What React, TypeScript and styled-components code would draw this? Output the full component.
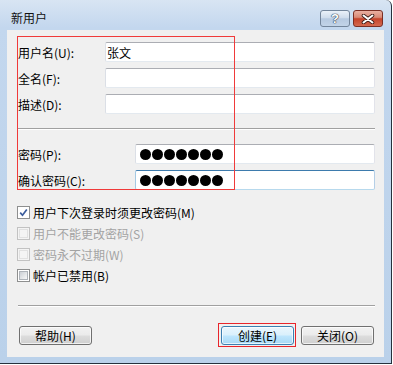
import React from "react";
import styled, { createGlobalStyle, css } from "styled-components";

const GlobalStyle = createGlobalStyle`
  html, body {
    margin: 0;
    padding: 0;
    background: #ffffff;
  }
  body {
    font-family: "Noto Sans CJK SC", "Liberation Sans", sans-serif;
    font-size: 12px;
    color: #000;
  }
`;

const fields = [
  { label: "用户名(U):", value: "张文" },
  { label: "全名(F):", value: "" },
  { label: "描述(D):", value: "" },
];

const passwords = [
  { label: "密码(P):", focused: false },
  { label: "确认密码(C):", focused: true },
];

const options = [
  { label: "用户下次登录时须更改密码(M)", checked: true, disabled: false },
  { label: "用户不能更改密码(S)", checked: false, disabled: true },
  { label: "密码永不过期(W)", checked: false, disabled: true },
  { label: "帐户已禁用(B)", checked: false, disabled: false },
];

function App() {
  return (
    <>
      <GlobalStyle />
      <Window>
        <TitleBar>
          <Title>新用户</Title>
          <CaptionButtons>
            <HelpButton>?</HelpButton>
            <CloseButton>
              <svg width="14" height="10" viewBox="0 0 14 10">
                <path d="M2.5 1.5 L11.5 8.5 M11.5 1.5 L2.5 8.5" stroke="#3a1a16" strokeWidth="3.6" strokeLinecap="round" />
                <path d="M2.5 1.5 L11.5 8.5 M11.5 1.5 L2.5 8.5" stroke="#ffffff" strokeWidth="2" strokeLinecap="round" />
              </svg>
            </CloseButton>
          </CaptionButtons>
        </TitleBar>

        <Client>
          <FieldGroup>
            {fields.map((f) => (
              <FieldRow key={f.label} $labelWidth={87}>
                <Label>{f.label}</Label>
                <TextBox>{f.value}</TextBox>
              </FieldRow>
            ))}
          </FieldGroup>

          <Separator $top={14} />

          <FieldGroup $top={14}>
            {passwords.map((p) => (
              <FieldRow key={p.label} $labelWidth={117}>
                <Label>{p.label}</Label>
                <TextBox $focused={p.focused}>
                  <Dots>
                    {Array.from({ length: 7 }).map((_, i) => (
                      <Dot key={i} />
                    ))}
                  </Dots>
                </TextBox>
              </FieldRow>
            ))}
          </FieldGroup>

          <OptionList>
            {options.map((o) => (
              <OptionRow key={o.label} $disabled={o.disabled}>
                <CheckBox $checked={o.checked} $disabled={o.disabled}>
                  {o.checked && (
                    <svg width="9" height="9" viewBox="0 0 9 9">
                      <path d="M1.2 4.6 L3.5 7.2 L7.8 1.4" fill="none" stroke="#3b5c9c" strokeWidth="1.7" />
                    </svg>
                  )}
                </CheckBox>
                {o.label}
              </OptionRow>
            ))}
          </OptionList>

          <Separator $top={19} />

          <ButtonBar>
            <PushButton>帮助(H)</PushButton>
            <ButtonGroup>
              <PushButton $default $marked>
                创建(E)
              </PushButton>
              <PushButton>关闭(O)</PushButton>
            </ButtonGroup>
          </ButtonBar>

          <Annotation />
        </Client>
      </Window>
    </>
  );
}

export default App;

const Window = styled.div`
  width: 392px;
  height: 364px;
  box-sizing: border-box;
  padding: 0 7px 6px 7px;
  border-right: 1px solid #26313d;
  border-bottom: 1px solid #26313d;
  border-top-right-radius: 6px;
  background: linear-gradient(180deg, #d8e5f3 0px, #c3d7ee 28px, #bad1ea 100%);
  display: flex;
  flex-direction: column;
`;

const TitleBar = styled.div`
  height: 30px;
  display: flex;
  justify-content: space-between;
  align-items: flex-start;
  padding: 0 1px 0 4px;
`;

const Title = styled.div`
  margin-top: 10px;
  line-height: 16px;
  font-size: 12px;
  color: #111;
`;

const CaptionButtons = styled.div`
  display: flex;
  gap: 3px;
  margin-top: 10px;
`;

const captionBase = css`
  width: 30px;
  height: 17px;
  box-sizing: border-box;
  border-radius: 3px;
  display: flex;
  align-items: center;
  justify-content: center;
`;

const HelpButton = styled.div`
  ${captionBase};
  border: 1px solid #73859b;
  background: linear-gradient(180deg, #eaf1f9 0%, #cfdcec 45%, #b6c9e0 52%, #c2d4e8 100%);
  color: #fff;
  font-family: "Liberation Sans", sans-serif;
  font-weight: bold;
  font-size: 13px;
  text-shadow: 0 0 1px #2a3a50, 0 0 1px #2a3a50, 0 0 1px #2a3a50;
`;

const CloseButton = styled.div`
  ${captionBase};
  border: 1px solid #7a2e24;
  background: linear-gradient(180deg, #eab0a2 0%, #d98a77 42%, #c5432b 52%, #d46a50 100%);
`;

const Client = styled.div`
  position: relative;
  flex: 1;
  background: #f0f0f0;
  padding: 12px 9px 0 11px;
  display: flex;
  flex-direction: column;
`;

const FieldGroup = styled.div<{ $top?: number }>`
  display: flex;
  flex-direction: column;
  gap: 6px;
  margin-top: ${(p) => p.$top ?? 0}px;
`;

const FieldRow = styled.div<{ $labelWidth: number }>`
  display: grid;
  grid-template-columns: ${(p) => p.$labelWidth}px 1fr;
  align-items: center;
  height: 20px;
`;

const Label = styled.span`
  font-size: 12px;
  white-space: nowrap;
`;

const TextBox = styled.div<{ $focused?: boolean }>`
  height: 20px;
  box-sizing: border-box;
  background: #fff;
  border: 1px solid;
  border-color: #abadb3 #e2e3ea #e3e9ef #dbdfe6;
  border-radius: 2px;
  padding-left: 1px;
  display: flex;
  align-items: center;
  font-size: 12px;
  ${(p) =>
    p.$focused &&
    css`
      border-color: #3d7bad #b5cfe7 #b7d9ed #a4c9e3;
    `}
`;

const Dots = styled.div`
  display: flex;
  gap: 1px;
  padding-left: 3px;
`;

const Dot = styled.span`
  width: 11px;
  height: 11px;
  border-radius: 50%;
  background: #000;
`;

const Separator = styled.div<{ $top: number }>`
  margin-top: ${(p) => p.$top}px;
  height: 0;
  border-top: 1px solid #a0a0a0;
  border-bottom: 1px solid #ffffff;
`;

const OptionList = styled.div`
  margin-top: 12px;
  display: flex;
  flex-direction: column;
`;

const OptionRow = styled.div<{ $disabled?: boolean }>`
  height: 21px;
  display: flex;
  align-items: center;
  gap: 3px;
  margin-left: -1px;
  font-size: 12px;
  color: ${(p) => (p.$disabled ? "#a3a3a3" : "#000")};
`;

const CheckBox = styled.span<{ $checked?: boolean; $disabled?: boolean }>`
  position: relative;
  width: 13px;
  height: 13px;
  box-sizing: border-box;
  border: 1px solid ${(p) => (p.$disabled ? "#c2c2c2" : "#8e8f8f")};
  background: ${(p) => (p.$disabled ? "#f4f4f4" : "#fff")};
  display: flex;
  align-items: center;
  justify-content: center;
  ${(p) =>
    !p.$checked &&
    css`
      &::before {
        content: "";
        position: absolute;
        inset: 1px;
        border: 1px solid ${p.$disabled ? "#e1e1e1" : "#aeb3b9"};
        background: ${p.$disabled
          ? "#f4f4f4"
          : "linear-gradient(135deg, #cbcfd5 0%, #e6e8ea 60%, #f7f7f7 100%)"};
      }
    `}
`;

const ButtonBar = styled.div`
  margin-top: 19px;
  display: flex;
  justify-content: space-between;
  padding-left: 1px;
  padding-right: 1px;
`;

const ButtonGroup = styled.div`
  display: flex;
  gap: 7px;
`;

const PushButton = styled.div<{ $default?: boolean; $marked?: boolean }>`
  position: relative;
  width: 73px;
  height: 19px;
  box-sizing: border-box;
  border: 1px solid #707070;
  border-radius: 3px;
  background: linear-gradient(180deg, #f2f2f2 0%, #ebebeb 48%, #dddddd 52%, #cfcfcf 100%);
  box-shadow: inset 0 0 0 1px rgba(255, 255, 255, 0.7);
  display: flex;
  align-items: center;
  justify-content: center;
  font-size: 12px;
  color: #000;
  ${(p) =>
    p.$default &&
    css`
      border-color: #3c7fb1;
      background: linear-gradient(180deg, #eaf6fd 0%, #d9f0fc 48%, #bee6fd 52%, #a7d9f5 100%);
    `}
  ${(p) =>
    p.$marked &&
    css`
      &::after {
        content: "";
        position: absolute;
        left: -4px;
        top: -4px;
        right: -3px;
        bottom: -3px;
        border: 1px solid #e8252b;
        pointer-events: none;
      }
    `}
`;

const Annotation = styled.div`
  position: absolute;
  left: 10px;
  top: 6px;
  width: 218px;
  height: 154px;
  box-sizing: border-box;
  border: 1px solid #f03a3a;
  pointer-events: none;
`;
